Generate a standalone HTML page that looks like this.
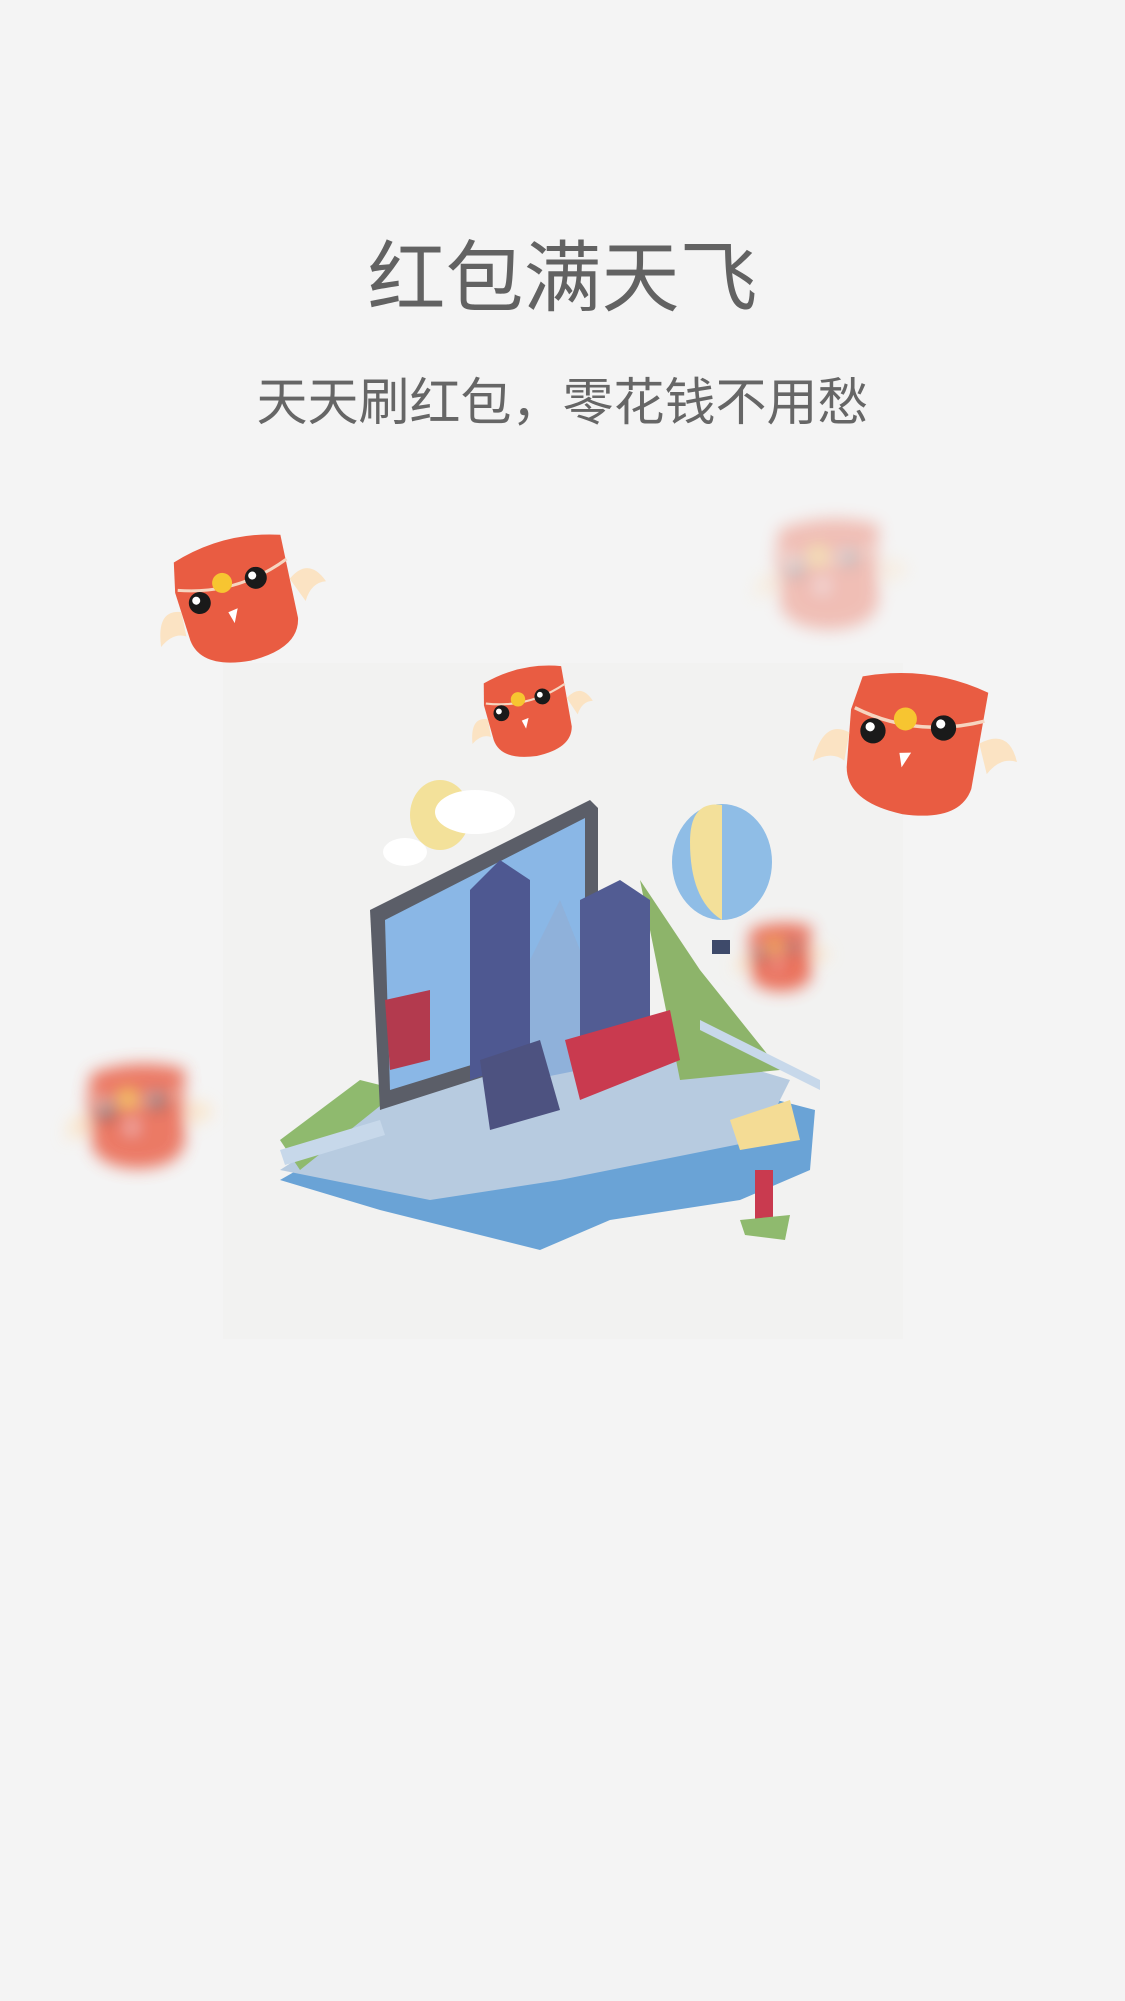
<!DOCTYPE html>
<html><head><meta charset="utf-8"><style>
html,body{margin:0;padding:0;background:#f4f4f4;}
body{width:1125px;height:2001px;position:relative;overflow:hidden;font-family:"Liberation Sans","Noto Sans CJK SC",sans-serif;}
.t{position:absolute;left:0;width:1125px;text-align:center;color:#626262;}
#t1{top:228px;font-size:78px;line-height:100px;}
#t2{top:368px;font-size:51px;line-height:70px;color:#666;}
svg{position:absolute;left:0;top:0;}
</style></head><body>
<div class="t" id="t1">红包满天飞</div>
<div class="t" id="t2">天天刷红包，零花钱不用愁</div>
<svg width="1125" height="2001" viewBox="0 0 1125 2001">
<defs>
<filter id="b" x="-50%" y="-50%" width="200%" height="200%"><feGaussianBlur stdDeviation="8"/></filter>
<g id="env">
 <path d="M-60,-20 L-55,-50 Q0,-70 55,-55 L55,30 Q50,60 0,62 Q-50,60 -55,30 Z" fill="#e95c42"/>
 <path d="M-57,-22 Q0,-5 56,-30" stroke="#f6d5c0" stroke-width="3" fill="none"/>
 <path d="M55,-10 Q78,-28 90,0 Q75,-2 66,15 Z" fill="#fbe3c3"/>
 <path d="M-58,0 Q-82,-8 -85,30 Q-70,18 -58,25 Z" fill="#fbe3c3"/>
 <circle cx="-12" cy="-20" r="10" fill="#f7c531"/>
 <circle cx="-38" cy="-5" r="11" fill="#1a1a1a"/><circle cx="-41" cy="-8" r="4" fill="#fff"/>
 <circle cx="22" cy="-18" r="11" fill="#1a1a1a"/><circle cx="19" cy="-21" r="4" fill="#fff"/>
 <path d="M-12,10 L-2,8 L-8,22 Z" fill="#fff"/>
</g>
</defs>
<rect x="223" y="663" width="680" height="676" fill="#f2f2f1"/>
<g opacity="0.35" filter="url(#b)"><use href="#env" transform="translate(829,574) scale(0.9)"/></g>
<g opacity="0.85" filter="url(#b)"><use href="#env" transform="translate(781,957) scale(0.55)"/></g>
<g opacity="0.8" filter="url(#b)"><use href="#env" transform="translate(138,1116) scale(0.85)"/></g>
<use href="#env" transform="translate(238,600) scale(1) rotate(-12)"/>
<use href="#env" transform="translate(529,712) scale(0.72) rotate(-10)"/>
<use href="#env" transform="translate(915,744) scale(1.15) rotate(10)"/>
<ellipse cx="440" cy="815" rx="30" ry="35" fill="#f3e19a"/>
<ellipse cx="475" cy="812" rx="40" ry="22" fill="#fff"/>
<ellipse cx="405" cy="852" rx="22" ry="14" fill="#fff"/>
<path d="M280,1180 L420,1100 L700,1080 L815,1110 L810,1170 L740,1200 L610,1220 L540,1250 L380,1210 Z" fill="#6aa3d6"/>
<path d="M280,1170 L420,1080 L690,1050 L790,1080 L760,1140 L560,1180 L430,1200 Z" fill="#b7cbe0"/>
<path d="M280,1140 L360,1080 L400,1090 L300,1170 Z" fill="#8fba6e"/>
<path d="M640,880 L700,970 L780,1070 L680,1080 Z" fill="#8db46a"/>
<path d="M370,910 L590,800 L598,808 L598,1040 L380,1110 Z" fill="#5b5e68"/>
<path d="M385,920 L585,818 L585,1030 L390,1090 Z" fill="#8ab7e6"/>
<path d="M470,890 L500,860 L530,880 L530,1060 L470,1080 Z" fill="#4e5891"/>
<path d="M530,960 L560,900 L580,950 L580,1070 L530,1080 Z" fill="#8fb1da"/>
<path d="M580,900 L620,880 L650,900 L650,1050 L580,1070 Z" fill="#525c93"/>
<path d="M565,1040 L670,1010 L680,1060 L580,1100 Z" fill="#c93a4f"/>
<path d="M480,1060 L540,1040 L560,1110 L490,1130 Z" fill="#4d5280"/>
<path d="M385,1000 L430,990 L430,1060 L390,1070 Z" fill="#b33a4e"/>
<ellipse cx="722" cy="862" rx="50" ry="58" fill="#8fbde6"/>
<path d="M690,842 Q690,800 722,805 L722,920 Q690,900 690,842 Z" fill="#f3e09a"/>
<rect x="712" y="940" width="18" height="14" fill="#3e4a6a"/>
<path d="M700,1020 L820,1080 L820,1090 L700,1030 Z" fill="#c7d8ea"/>
<path d="M280,1150 L380,1120 L385,1135 L285,1165 Z" fill="#c7d8ea"/>
<rect x="755" y="1170" width="18" height="60" fill="#c93a4f"/>
<path d="M740,1220 L790,1215 L785,1240 L745,1235 Z" fill="#8fba6e"/>
<path d="M730,1120 L790,1100 L800,1140 L740,1150 Z" fill="#f4dc95"/>
</svg>
</body></html>
